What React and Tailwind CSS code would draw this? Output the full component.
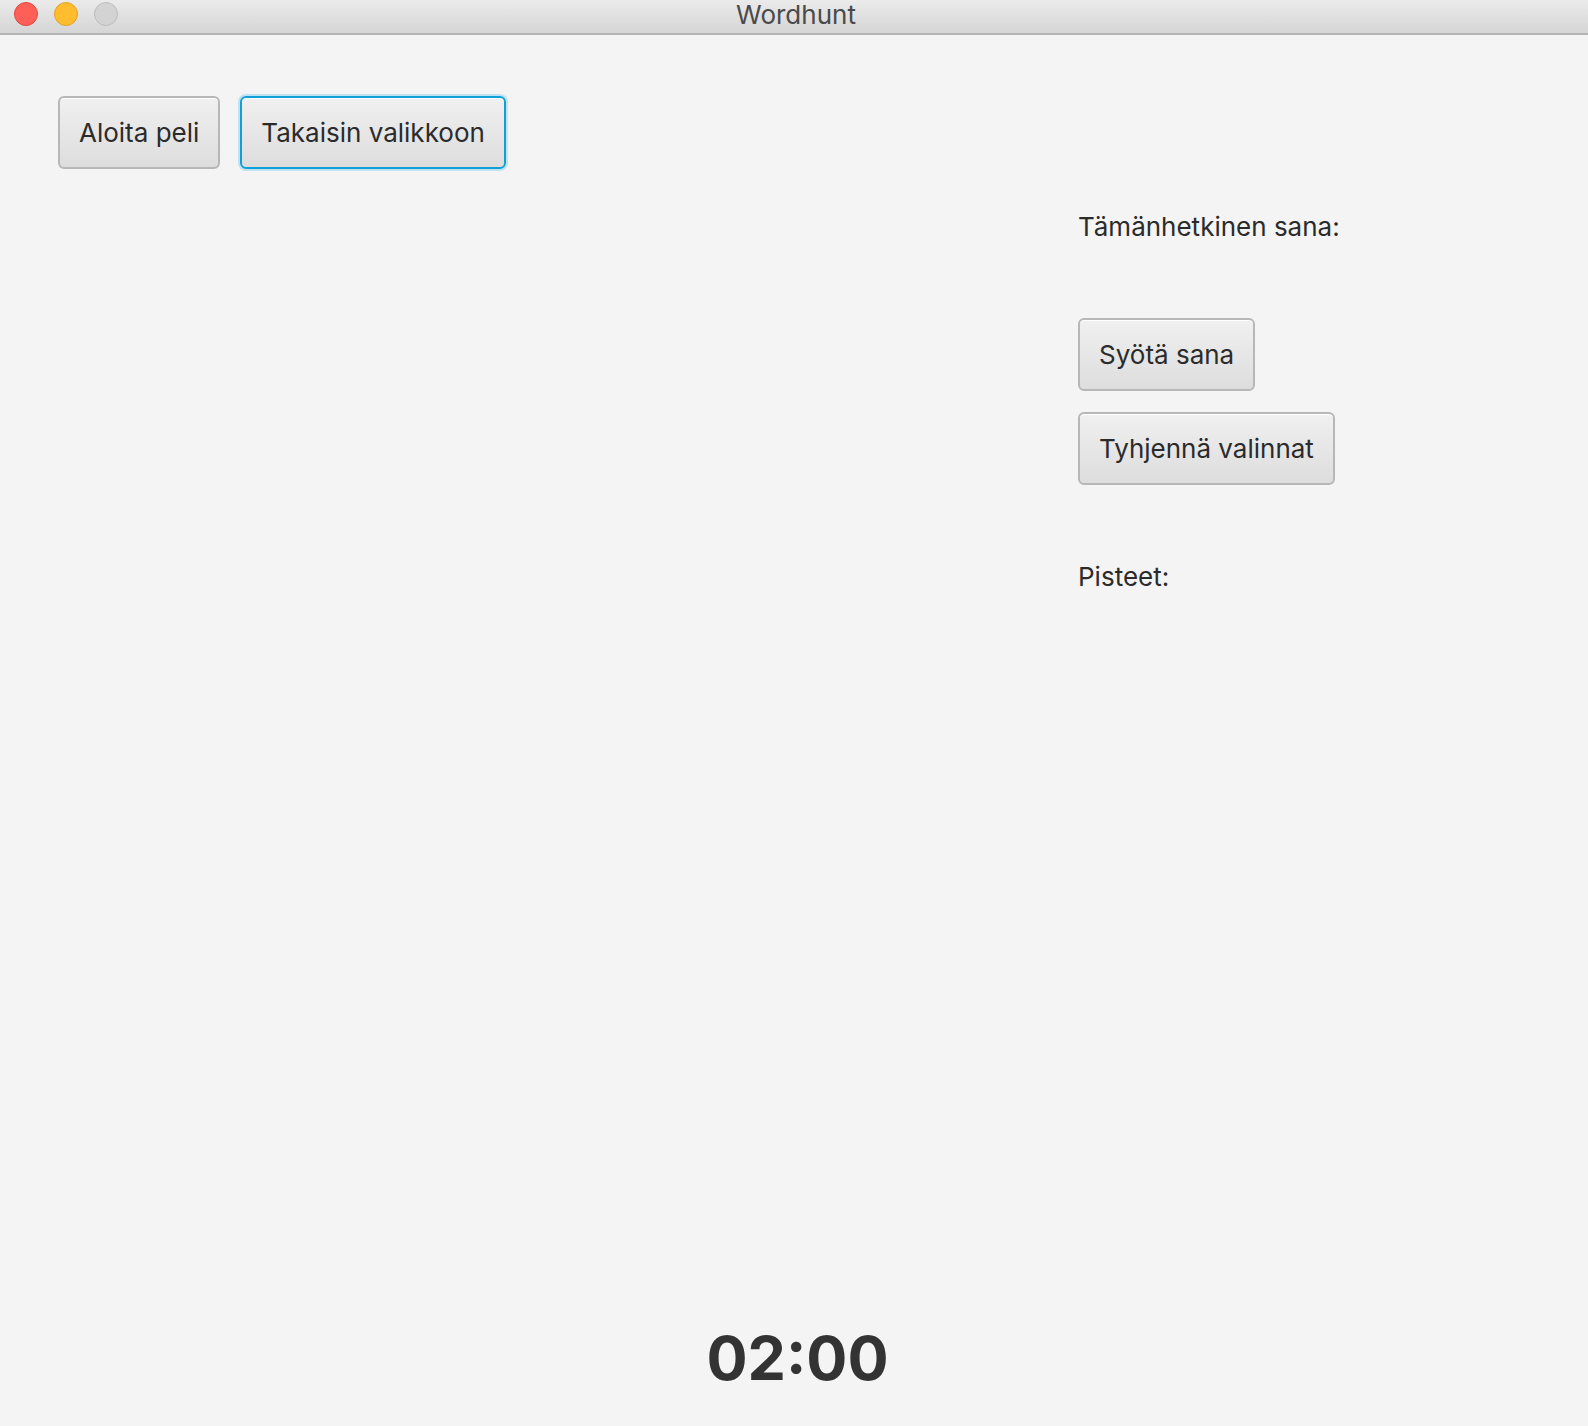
import React from 'react';

const font = { fontFamily: 'Inter, "Liberation Sans", Arial, sans-serif' };

function FxButton({ children, focused }) {
  return (
    <button
      className={
        focused
          ? 'h-[73px] px-[19px] rounded-[6px] border-2 border-[#0fa0d8] bg-gradient-to-b from-[#f0f0f0] to-[#dddddd] text-[26px] text-[#2b2b2b] shadow-[0_0_0_2px_#bfe3f5,inset_0_1px_0_#ffffff] whitespace-nowrap'
          : 'h-[73px] px-[19px] rounded-[6px] border-2 border-[#b7b7b7] bg-gradient-to-b from-[#f0f0f0] to-[#dddddd] text-[26px] text-[#2b2b2b] shadow-[inset_0_1px_0_#ffffff] whitespace-nowrap'
      }
    >
      {children}
    </button>
  );
}

export default function App() {
  return (
    <div className="w-[1588px] h-[1426px] flex flex-col bg-[#f4f4f4] text-[#2b2b2b]" style={font}>
      <div className="relative h-[35px] flex items-center justify-center bg-gradient-to-b from-[#ebebeb] to-[#d5d5d5] border-b-2 border-[#b4b4b4]">
        <div className="absolute left-[14px] top-[2px] flex gap-[16px]">
          <span className="w-[24px] h-[24px] rounded-full bg-[#fe5f57] border border-[#e2463f]" />
          <span className="w-[24px] h-[24px] rounded-full bg-[#febc2e] border border-[#e1a325]" />
          <span className="w-[24px] h-[24px] rounded-full bg-[#d3d3d3] border border-[#bcbcbc]" />
        </div>
        <span className="text-[26px] text-[#4a4a4a] leading-none -mt-[4px] pl-[4px]">Wordhunt</span>
      </div>

      <div className="flex-1 grid grid-cols-[1078px_1fr]">
        <div className="pl-[58px] pt-[61px] flex gap-[20px] items-start">
          <FxButton>Aloita peli</FxButton>
          <FxButton focused>Takaisin valikkoon</FxButton>
        </div>
        <div className="pt-[177px] flex flex-col items-start">
          <div className="text-[26px] leading-[30px]">Tämänhetkinen sana:</div>
          <div className="mt-[76px] flex flex-col items-start gap-[21px]">
            <FxButton>Syötä sana</FxButton>
            <FxButton>Tyhjennä valinnat</FxButton>
          </div>
          <div className="mt-[77px] text-[26px] leading-[30px]">Pisteet:</div>
        </div>
      </div>

      <div className="flex justify-center pb-[37px] pl-[7px]">
        <span className="text-[61px] font-bold leading-none text-[#333333]">02:00</span>
      </div>
    </div>
  );
}
